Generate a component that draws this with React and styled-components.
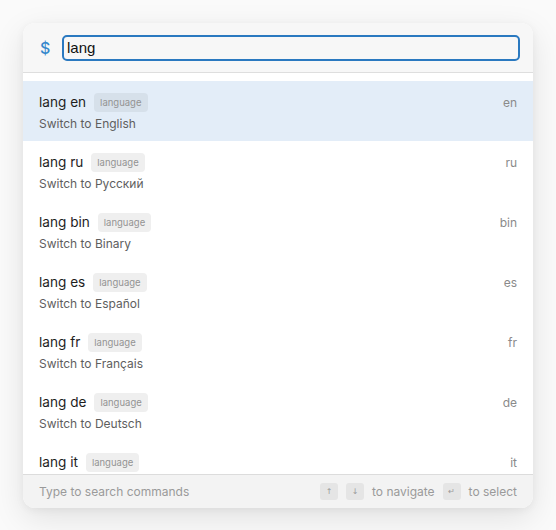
import React, { useState } from 'react';
import styled, { createGlobalStyle } from 'styled-components';

const GlobalStyle = createGlobalStyle`
    html, body {
        margin: 0;
        padding: 0;
        background: #fafafa;
        font-family: Inter, "Noto Sans", sans-serif;
    }
`;

const Page = styled.div`
    padding: 23px;
    min-height: 530px;
    box-sizing: border-box;
`;

const Palette = styled.div`
    width: 510px;
    height: 485px;
    background: #ffffff;
    border-radius: 12px;
    box-shadow: 0 10px 32px rgba(0, 0, 0, 0.10), 0 2px 8px rgba(0, 0, 0, 0.05);
    overflow: hidden;
    display: flex;
    flex-direction: column;
`;

const SearchBar = styled.div`
    height: 50px;
    box-sizing: border-box;
    display: flex;
    align-items: center;
    gap: 14px;
    padding: 0 13px 0 17px;
    background: #f7f7f7;
    border-bottom: 1px solid #dedede;
`;

const Prompt = styled.span`
    color: #3588cc;
    font-size: 16px;
    font-weight: 500;
    width: 8px;
`;

const SearchInput = styled.input`
    flex: 1;
    height: 26px;
    box-sizing: border-box;
    border: 2px solid #2a79c0;
    border-radius: 5px;
    background: #f7f7f7;
    padding: 0 3px;
    font-family: "Liberation Sans", Arial, sans-serif;
    font-size: 15px;
    color: #111;
    outline: none;
`;

const List = styled.div`
    flex: 1;
    padding-top: 8px;
    overflow-y: auto;
    scrollbar-width: none;
    &::-webkit-scrollbar { display: none; }
`;

const Row = styled.div`
    height: 60px;
    box-sizing: border-box;
    padding: 11px 16px 9px;
    display: flex;
    flex-direction: column;
    gap: 4px;
    background: ${props => props.$active ? '#e3edf8' : 'transparent'};
    cursor: pointer;
`;

const TitleLine = styled.div`
    height: 20px;
    display: flex;
    align-items: center;
    gap: 8px;
`;

const Title = styled.span`
    font-size: 13.6px;
    color: #1e1e1e;
`;

const Badge = styled.span`
    height: 19px;
    line-height: 19px;
    padding: 0 6px;
    border-radius: 4px;
    background: ${props => props.$active ? '#d6e0ea' : '#efefef'};
    color: #939393;
    font-size: 9.5px;
`;

const Alias = styled.span`
    margin-left: auto;
    font-size: 12px;
    color: #8a8a8a;
`;

const Subtitle = styled.div`
    font-size: 12px;
    line-height: 16px;
    color: #5e5e5e;
`;

const Footer = styled.div`
    height: 34px;
    box-sizing: border-box;
    flex-shrink: 0;
    display: flex;
    align-items: center;
    gap: 8px;
    padding: 0 16px;
    background: #f3f3f3;
    border-top: 1px solid #dcdcdc;
    font-size: 12px;
    color: #9a9a9a;
`;

const Hint = styled.span`
    margin-right: auto;
`;

const Key = styled.kbd`
    width: 18px;
    height: 17px;
    display: inline-flex;
    align-items: center;
    justify-content: center;
    border-radius: 3px;
    background: #e5e5e5;
    color: #9a9a9a;
    font-family: "DejaVu Sans", sans-serif;
    font-size: 8px;
`;

const commands = [
    { alias: 'en', name: 'English' },
    { alias: 'ru', name: 'Русский' },
    { alias: 'bin', name: 'Binary' },
    { alias: 'es', name: 'Español' },
    { alias: 'fr', name: 'Français' },
    { alias: 'de', name: 'Deutsch' },
    { alias: 'it', name: 'Italiano' },
];

const App = () => {
    const [query, setQuery] = useState('lang');
    const [active, setActive] = useState(0);

    return (
        <>
            <GlobalStyle />
            <Page>
                <Palette>
                    {/* search field */}
                    <SearchBar>
                        <Prompt>$</Prompt>
                        <SearchInput value={query} onChange={e => setQuery(e.target.value)} />
                    </SearchBar>
                    {/* matching commands */}
                    <List>
                        {commands.map((c, i) => (
                            <Row key={c.alias} $active={i === active} onMouseEnter={() => setActive(i)}>
                                <TitleLine>
                                    <Title>lang {c.alias}</Title>
                                    <Badge $active={i === active}>language</Badge>
                                    <Alias>{c.alias}</Alias>
                                </TitleLine>
                                <Subtitle>Switch to {c.name}</Subtitle>
                            </Row>
                        ))}
                    </List>
                    <Footer>
                        <Hint>Type to search commands</Hint>
                        <Key>↑</Key>
                        <Key>↓</Key>
                        <span>to navigate</span>
                        <Key>↵</Key>
                        <span>to select</span>
                    </Footer>
                </Palette>
            </Page>
        </>
    );
};

export default App;
